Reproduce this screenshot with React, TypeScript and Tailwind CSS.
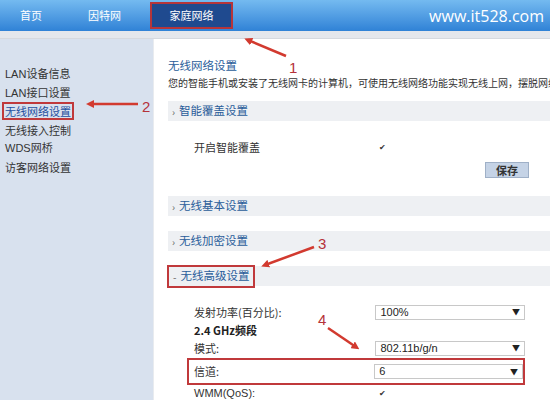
import React from 'react';

const cjk = { fontFamily: '"Noto Sans CJK SC", "Liberation Sans", sans-serif' };

const sideItems = ['LAN设备信息', 'LAN接口设置', '无线网络设置', '无线接入控制', 'WDS网桥', '访客网络设置'];

function Section({ title, open, boxed }: { title: string; open?: boolean; boxed?: boolean }) {
  return (
    <div className="h-[20px] bg-[#eef0f3] flex items-center">
      <div
        className={
          boxed
            ? 'h-[23px] px-[4px] -ml-[1px] flex items-center border-2 border-[#c0393b]'
            : 'pl-[4px] flex items-center'
        }
      >
        <span className="text-[#666] text-[10px] mr-[4px]">{open ? '-' : '›'}</span>
        <span className="text-[#2a5d9a] text-[11.5px]">{title}</span>
      </div>
    </div>
  );
}

function Select({ value }: { value: string }) {
  return (
    <div className="w-[150px] h-[15px] border border-[#c8c8c8] bg-white flex items-center justify-between px-[4px] text-[11px] text-[#222]">
      <span style={{ fontFamily: '"Liberation Sans", sans-serif' }}>{value}</span>
      <span className="text-[8px] text-[#222]">▼</span>
    </div>
  );
}

function Check() {
  return <span className="text-[8px] text-[#333] leading-none">✔</span>;
}

export default function App() {
  return (
    <div className="w-[550px] h-[400px] overflow-hidden relative bg-white" style={cjk}>
      {/* header */}
      <div className="h-[31px] bg-gradient-to-b from-[#74baf0] to-[#2f82d6] flex items-stretch text-white text-[11px]">
        <div className="w-[62px] flex items-center justify-center">首页</div>
        <div className="w-[85px] flex items-center justify-center">因特网</div>
        <div className="w-[83px] my-[2px] ml-[3px] bg-[#1f4a8f] border-2 border-[#b5353a] flex items-center justify-center">
          家庭网络
        </div>
        <div className="flex-1 flex items-center justify-end pr-[6px] text-[16px]" style={{ fontFamily: '"Open Sans", sans-serif' }}>
          www.it528.com
        </div>
      </div>
      <div className="h-[8px] bg-[#e4e7ec] border-b border-[#d5d9df]" />

      <div className="flex h-[361px]">
        {/* sidebar */}
        <div className="w-[153px] bg-[#d8e1ee] pt-[26px] pl-[5px] text-[11px] text-[#333]">
          {sideItems.map((s) =>
            s === '无线网络设置' ? (
              <div key={s} className="h-[18.5px] flex items-center">
                <span className="border-2 border-[#c0393b] px-[1px] -ml-[3px] text-[#1f4fa0] leading-[14px]">{s}</span>
              </div>
            ) : (
              <div key={s} className="h-[18.5px] flex items-center" style={s.startsWith('LAN') || s.startsWith('WDS') ? { fontFamily: '"Liberation Sans", "Noto Sans CJK SC", sans-serif' } : undefined}>
                {s}
              </div>
            )
          )}
        </div>

        {/* content */}
        <div className="flex-1 pl-[14px] border-l border-[#e8ebef] overflow-hidden">
          <div className="pt-[18px] text-[11.5px] text-[#2a5d9a] h-[36px]">无线网络设置</div>
          <div className="text-[10px] text-[#333] whitespace-nowrap h-[20px]">
            您的智能手机或安装了无线网卡的计算机，可使用无线网络功能实现无线上网，摆脱网线的束缚。
          </div>
          <div className="mt-[6px]">
            <Section title="智能覆盖设置" />
          </div>
          <div className="pl-[26px] mt-[18px] flex items-center h-[16px] text-[11px] text-[#333]">
            <span className="w-[185px]">开启智能覆盖</span>
            <Check />
          </div>
          <div className="flex justify-end pr-[21px] mt-[7px]">
            <div className="w-[44px] h-[16px] bg-[#c5d3e6] border border-[#9fb0c7] text-[11px] text-[#333] font-bold flex items-center justify-center">
              保存
            </div>
          </div>
          <div className="mt-[18px]">
            <Section title="无线基本设置" />
          </div>
          <div className="mt-[15px]">
            <Section title="无线加密设置" />
          </div>
          <div className="mt-[15px]">
            <Section title="无线高级设置" open boxed />
          </div>
          <div className="pl-[26px] pr-[25px] mt-[17px] text-[11px] text-[#333]">
            <div className="flex items-center h-[18px]">
              <span className="w-[182px]">发射功率(百分比):</span>
              <Select value="100%" />
            </div>
            <div className="h-[18px] flex items-center font-bold text-[11px] text-[#222]">2.4 GHz频段</div>
            <div className="flex items-center h-[18px]">
              <span className="w-[182px]">模式:</span>
              <Select value="802.11b/g/n" />
            </div>
            <div className="flex items-center h-[27px] -ml-[7px] pl-[5px] border-2 border-[#c0393b] mt-[1px]">
              <span className="w-[182px]">信道:</span>
              <Select value="6" />
            </div>
            <div className="flex items-center h-[16px]">
              <span className="w-[185px]" style={{ fontFamily: '"Liberation Sans", sans-serif' }}>WMM(QoS):</span>
              <Check />
            </div>
          </div>
        </div>
      </div>

      {/* annotation arrows */}
      <svg className="absolute inset-0 pointer-events-none" width="550" height="400">
        <defs>
          <marker id="ah" markerWidth="8" markerHeight="8" refX="4" refY="4" orient="auto" markerUnits="userSpaceOnUse">
            <path d="M0,0 L8,4 L0,8 z" fill="#d23a2f" />
          </marker>
        </defs>
        <path d="M286,56 L248,40" stroke="#d23a2f" strokeWidth="2.5" markerEnd="url(#ah)" />
        <path d="M138,104 L90,104" stroke="#d23a2f" strokeWidth="2.5" markerEnd="url(#ah)" />
        <path d="M314,247 L265,265" stroke="#d23a2f" strokeWidth="2.5" markerEnd="url(#ah)" />
        <path d="M328,328 L356,347" stroke="#d23a2f" strokeWidth="2.5" markerEnd="url(#ah)" />
      </svg>
      <div className="absolute left-[289px] top-[57px] text-[15px] text-[#b5323a]" style={{ fontFamily: '"Liberation Sans", sans-serif' }}>1</div>
      <div className="absolute left-[142px] top-[96px] text-[15px] text-[#b5323a]" style={{ fontFamily: '"Liberation Sans", sans-serif' }}>2</div>
      <div className="absolute left-[318px] top-[233px] text-[15px] text-[#b5323a]" style={{ fontFamily: '"Liberation Sans", sans-serif' }}>3</div>
      <div className="absolute left-[318px] top-[309px] text-[15px] text-[#b5323a]" style={{ fontFamily: '"Liberation Sans", sans-serif' }}>4</div>
    </div>
  );
}
